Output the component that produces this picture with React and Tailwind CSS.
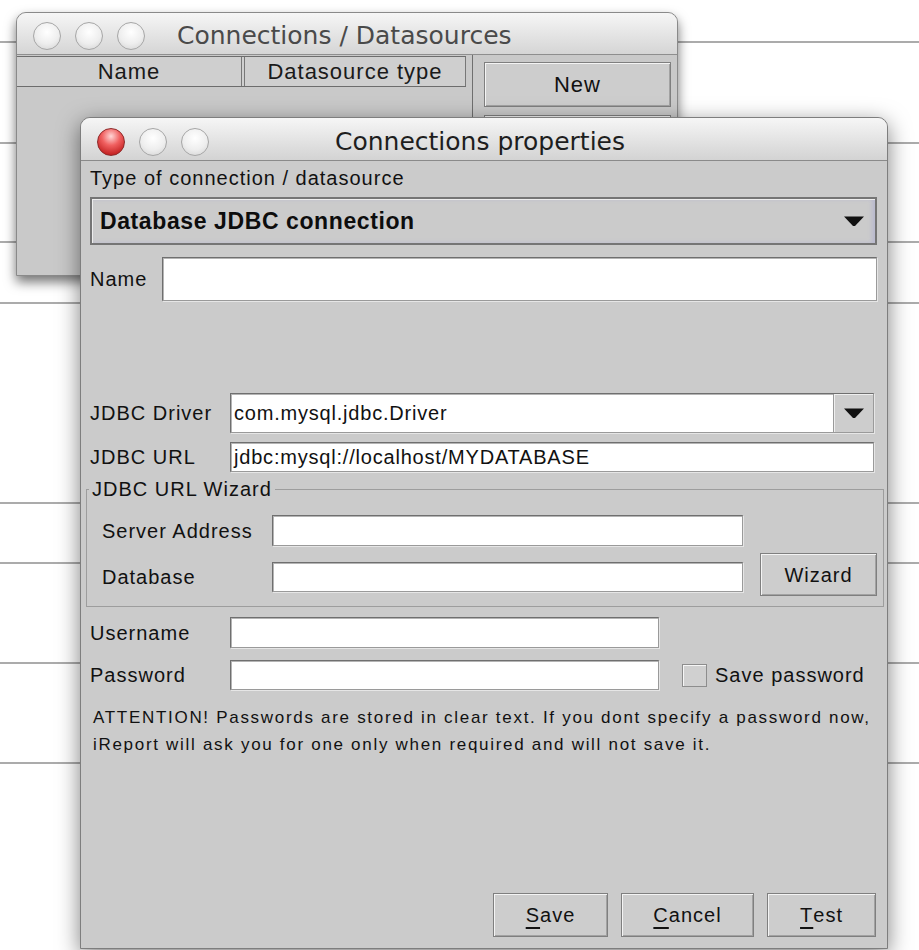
import React from 'react';

// horizontal rules of the document lying behind the windows
const RULES = [41, 142, 241, 302, 502, 562, 662, 762];

const UI = "font-['Liberation_Sans',Arial,sans-serif]";
const TITLE = "font-['DejaVu_Sans',Verdana,sans-serif]";

function Light({ red }) {
  if (red) {
    return (
      <span className="block h-[28px] w-[28px] rounded-full border border-[#8e2a2a] bg-[radial-gradient(circle_at_50%_28%,#ffd6d6_0%,#f06060_40%,#bf1c1c_85%,#9a1414_100%)]" />
    );
  }
  return (
    <span className="block h-[28px] w-[28px] rounded-full border border-[#a6a6a6] bg-[radial-gradient(circle_at_50%_35%,#ffffff_0%,#eeeeee_55%,#d0d0d0_100%)]" />
  );
}

function Lights({ active }) {
  return (
    <div className="flex gap-[14px]">
      <Light red={active} />
      <Light />
      <Light />
    </div>
  );
}

function Arrow() {
  return (
    <svg width="22" height="12" viewBox="0 0 22 12">
      <path d="M1 1.5h20l-9 9.5h-2z" fill="#111" />
    </svg>
  );
}

function Field({ className = '', children }) {
  return (
    <div
      className={`flex items-center overflow-hidden bg-white border border-[#6f6f6f] border-r-[#9a9a9a] border-b-[#9a9a9a] shadow-[inset_1px_1px_0_#b4b4b4,1px_1px_0_#e6e6e6] pl-[3px] text-[20px] tracking-[0.8px] text-[#111] ${className}`}
    >
      {children}
    </div>
  );
}

function Button({ className = '', children }) {
  return (
    <div
      className={`flex items-center justify-center bg-[#cdcdcd] border border-[#7f7f7f] shadow-[inset_1px_1px_0_#f4f4f4,inset_-1px_-1px_0_#a2a2a2] text-[20px] tracking-[1px] text-[#111] ${className}`}
    >
      {children}
    </div>
  );
}

function Label({ className = '', children }) {
  return <span className={`shrink-0 text-[20px] leading-[24px] tracking-[1px] text-[#111] ${className}`}>{children}</span>;
}

function Key({ children }) {
  return <span className="underline decoration-2 underline-offset-[5px]">{children}</span>;
}

function DatasourcesWindow() {
  return (
    <div className="absolute left-[16px] top-[12px] flex h-[264px] w-[662px] flex-col overflow-hidden rounded-t-[10px] border border-[#8a8a8a] bg-[#c9c9c9] shadow-[0_6px_12px_rgba(0,0,0,0.55)]">
      <div className="flex h-[42px] shrink-0 items-center border-b border-[#8e8e8e] bg-linear-to-b from-[#f6f6f6] to-[#d5d5d5] pl-[16px] pt-[4px]">
        <Lights />
        <span className={`${TITLE} ml-[32px] text-[25px] leading-[30px] text-[#4a4a4a]`}>Connections / Datasources</span>
      </div>
      <div className={`${UI} flex flex-1`}>
        <div className="w-[449px] pt-[1px]">
          <div className="flex h-[31px] border-y border-[#6d6d6d] bg-[#cfcfcf] text-[22px] tracking-[1px] text-[#1a1a1a]">
            <div className="flex w-[225px] items-center justify-center border-r border-[#777]">Name</div>
            <div className="ml-[2px] flex flex-1 items-center justify-center border-x border-[#777]">Datasource type</div>
          </div>
        </div>
        <div className="ml-[6px] flex flex-1 flex-col gap-[8px] border-l border-[#6f6f6f] pl-[11px] pt-[7px]">
          <Button className="h-[45px] w-[187px] text-[22px]">New</Button>
          <Button className="h-[45px] w-[187px]" />
        </div>
      </div>
    </div>
  );
}

function PropertiesWindow() {
  return (
    <div className="absolute left-[80px] top-[117px] flex h-[832px] w-[808px] flex-col overflow-hidden rounded-t-[10px] border border-[#7e7e7e] bg-[#cbcbcb] shadow-[0_6px_22px_rgba(0,0,0,0.5)]">
      <div className="flex h-[43px] shrink-0 items-center border-b border-[#8a8a8a] bg-linear-to-b from-[#f6f6f6] to-[#d3d3d3] pl-[16px] pt-[5px]">
        <Lights active />
        <span className={`${TITLE} ml-[126px] text-[25px] leading-[30px] text-[#1e1e1e]`}>Connections properties</span>
      </div>

      <div className={`${UI} flex flex-1 flex-col pl-[9px] pr-[10px]`}>
        <Label className="mt-[5px]">Type of connection / datasource</Label>

        <div className="mt-[7px] flex h-[48px] items-center justify-between border-2 border-[#757575] bg-[#cbcbcb] pl-[8px] pr-[10px] shadow-[inset_1px_1px_0_#ededed,inset_-3px_0_4px_#b9b9cf]">
          <span className="text-[23px] font-bold tracking-[0.6px] text-[#0d0d0d]">Database JDBC connection</span>
          <Arrow />
        </div>

        <div className="mt-[12px] flex h-[44px] items-center">
          <Label className="w-[72px]">Name</Label>
          <Field className="h-full flex-1" />
        </div>

        <div className="mt-[92px] flex h-[40px] items-center">
          <Label className="w-[140px]">JDBC Driver</Label>
          <Field className="mr-[3px] h-full flex-1 pr-0">
            <span className="flex-1">com.mysql.jdbc.Driver</span>
            <span className="flex h-full w-[40px] items-center justify-center border-l border-[#9a9a9a] bg-[#cdcdcd] shadow-[inset_1px_1px_0_#efefef]">
              <Arrow />
            </span>
          </Field>
        </div>

        <div className="mt-[9px] flex h-[30px] items-center">
          <Label className="w-[140px]">JDBC URL</Label>
          <Field className="mr-[3px] h-full flex-1">jdbc:mysql://localhost/MYDATABASE</Field>
        </div>

        <fieldset className="ml-[-4px] mr-[-7px] mt-[5px] border border-[#9d9d9d] pb-[10px] pr-[6px]">
          <legend className="ml-[2px] px-[3px] text-[20px] leading-[24px] tracking-[1px] text-[#111]">JDBC URL Wizard</legend>
          <div className="mt-[14px] flex h-[31px] items-center pl-[15px]">
            <Label className="w-[170px]">Server Address</Label>
            <Field className="h-full w-[471px]" />
          </div>
          <div className="mt-[7px] flex h-[43px] items-start pl-[15px]">
            <Label className="mt-[12px] w-[170px]">Database</Label>
            <Field className="mt-[9px] h-[30px] w-[471px]" />
            <Button className="ml-auto h-[43px] w-[117px]">Wizard</Button>
          </div>
        </fieldset>

        <div className="mt-[10px] flex h-[31px] items-center">
          <Label className="w-[140px]">Username</Label>
          <Field className="h-full w-[429px]" />
        </div>

        <div className="mt-[12px] flex h-[30px] items-center">
          <Label className="w-[140px]">Password</Label>
          <Field className="h-full w-[429px]" />
          <span className="ml-[23px] h-[23px] w-[25px] border border-[#8d8d8d] bg-[#d0d0d0] shadow-[inset_1px_1px_0_#f6f6f6]" />
          <Label className="ml-[8px]">Save password</Label>
        </div>

        <div className="ml-[3px] mt-[14px] whitespace-nowrap text-[17px] leading-[27px] tracking-[1.7px] text-[#111]">
          <div>ATTENTION! Passwords are stored in clear text. If you dont specify a password now,</div>
          <div>iReport will ask you for one only when required and will not save it.</div>
        </div>

        <div className="mt-auto mb-[11px] mr-[1px] flex justify-end gap-[13px]">
          <Button className="h-[44px] w-[115px]">
            <Key>S</Key>ave
          </Button>
          <Button className="h-[44px] w-[133px]">
            <Key>C</Key>ancel
          </Button>
          <Button className="h-[44px] w-[109px]">
            <Key>T</Key>est
          </Button>
        </div>
      </div>
    </div>
  );
}

export default function App() {
  return (
    <div className="relative h-[950px] w-[919px] overflow-hidden bg-white">
      {RULES.map((y) => (
        <div key={y} className="absolute left-0 right-0 h-[2px] bg-[#ababab]" style={{ top: y }} />
      ))}
      <DatasourcesWindow />
      <PropertiesWindow />
    </div>
  );
}
